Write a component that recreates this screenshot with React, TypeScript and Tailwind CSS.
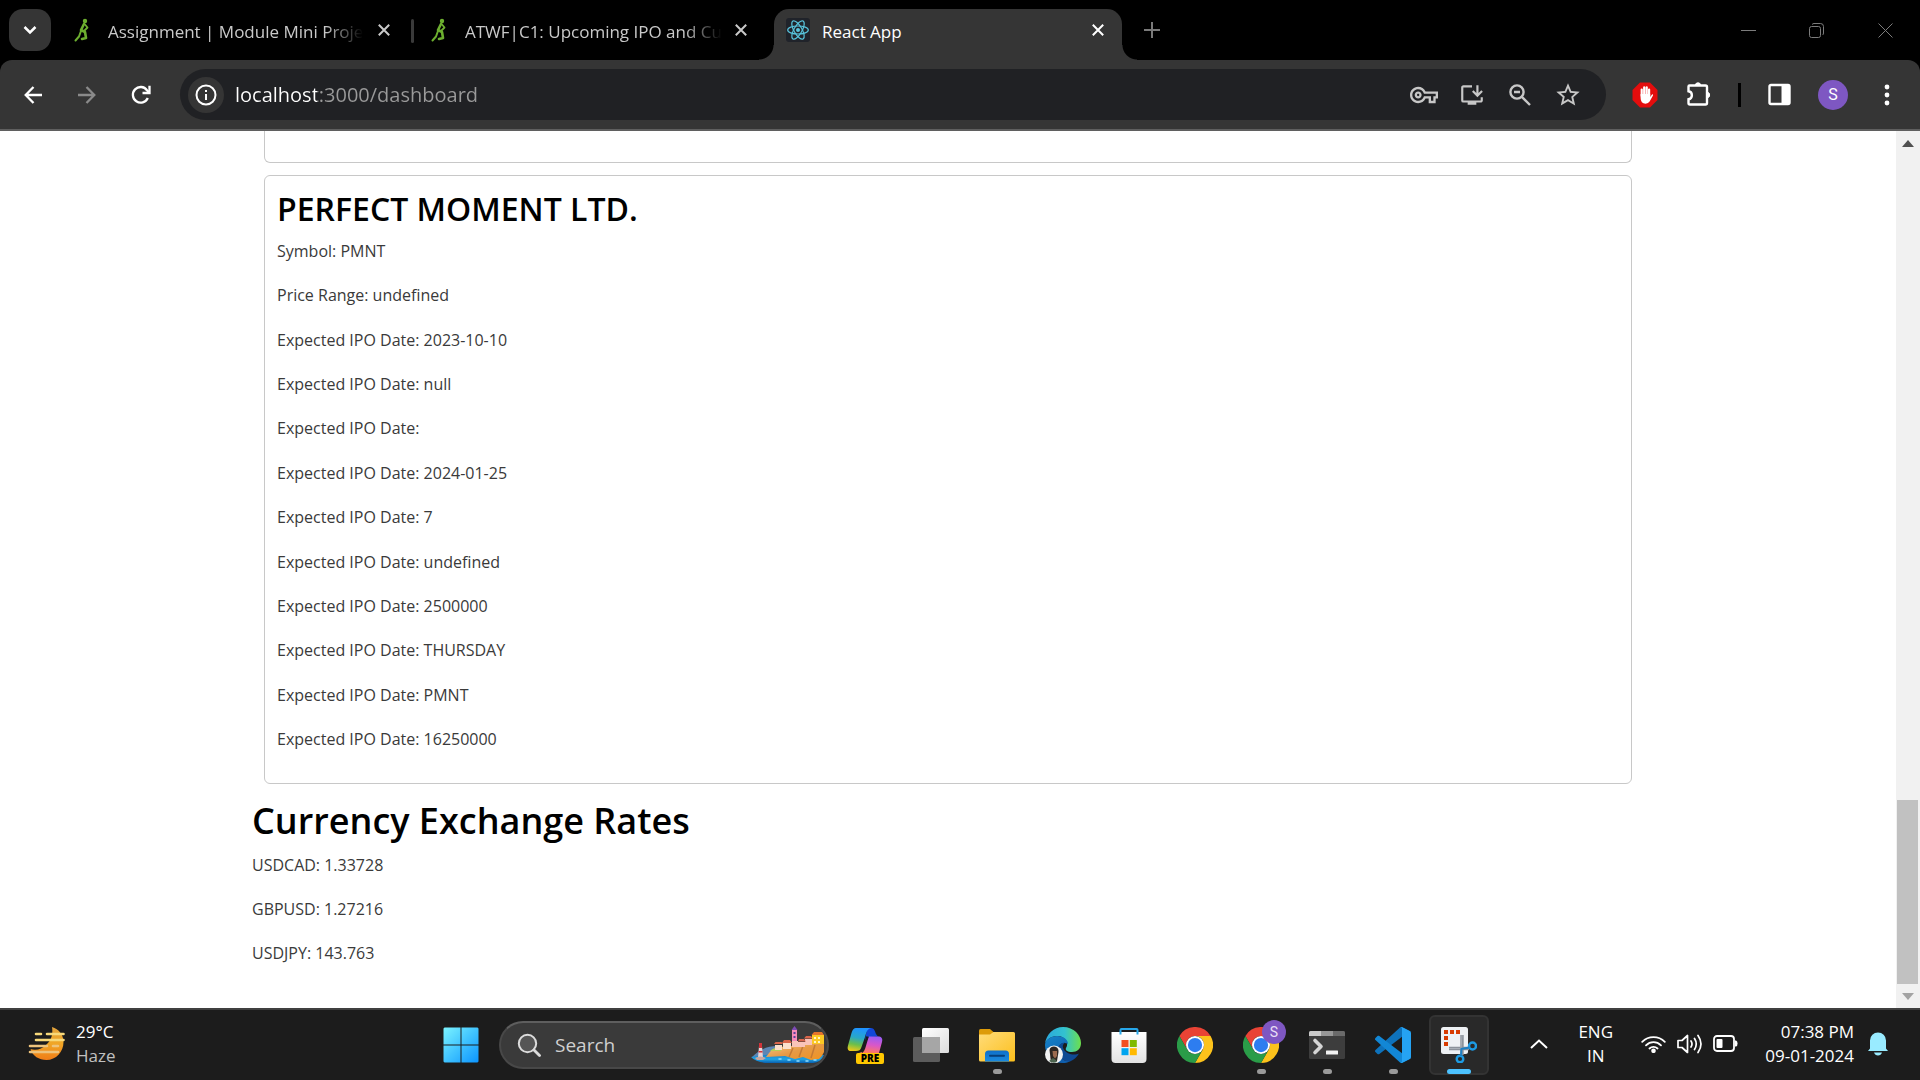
import React from "react";
import type { ReactNode } from "react";
import { MdOutlineInstallDesktop, MdOutlineVpnKey, MdStarOutline } from "react-icons/md";

const ipoLines = [
  "Symbol: PMNT",
  "Price Range: undefined",
  "Expected IPO Date: 2023-10-10",
  "Expected IPO Date: null",
  "Expected IPO Date:",
  "Expected IPO Date: 2024-01-25",
  "Expected IPO Date: 7",
  "Expected IPO Date: undefined",
  "Expected IPO Date: 2500000",
  "Expected IPO Date: THURSDAY",
  "Expected IPO Date: PMNT",
  "Expected IPO Date: 16250000",
];

const rates = ["USDCAD: 1.33728", "GBPUSD: 1.27216", "USDJPY: 143.763"];

/* ---------- browser icons ---------- */

function RunnerIcon() {
  return (
    <svg viewBox="0 0 24 24" className="size-6 shrink-0" aria-hidden="true">
      <g fill="none" stroke="#6cae2f" strokeLinecap="round" strokeLinejoin="round">
        <circle cx="13" cy="3" r="1.6" fill="#6cae2f" strokeWidth="1.2" />
        <path d="M12 6 L9 12 L13 14 L14 20 L10 21" strokeWidth="2.6" />
        <path d="M13 6.500 L15.500 9.500 L12.500 12.500" strokeWidth="1.8" />
        <path d="M9 13 L7 18.500 L3.500 22.500" strokeWidth="2" />
      </g>
    </svg>
  );
}

function ReactIcon() {
  return (
    <svg viewBox="0 0 24 24" className="size-6 shrink-0" aria-hidden="true">
      <rect width="24" height="24" rx="3" fill="#20232a" />
      <g fill="none" stroke="#58c4dc" strokeWidth="1.200">
        <ellipse cx="12" cy="12" rx="10.300" ry="4" />
        <ellipse cx="12" cy="12" rx="10.300" ry="4" transform="rotate(60 12 12)" />
        <ellipse cx="12" cy="12" rx="10.300" ry="4" transform="rotate(120 12 12)" />
      </g>
      <circle cx="12" cy="12" r="2" fill="#58c4dc" />
    </svg>
  );
}

function CloseIcon() {
  return (
    <svg viewBox="0 0 12 12" className="size-3" fill="none" stroke="currentColor" strokeWidth="2" aria-hidden="true">
      <path d="M0.800 0.800 L11.200 11.200 M11.200 0.800 L0.800 11.200" />
    </svg>
  );
}

function BackIcon() {
  return (
    <svg viewBox="0 0 18 18" className="size-[18px]" fill="none" stroke="currentColor" strokeWidth="2.300" aria-hidden="true">
      <path d="M18 9 H2 M9.500 1 L1.700 9 L9.500 17" />
    </svg>
  );
}

function ForwardIcon() {
  return (
    <svg viewBox="0 0 18 18" className="size-[18px]" fill="none" stroke="currentColor" strokeWidth="2.300" aria-hidden="true">
      <path d="M0 9 H16 M8.500 1 L16.300 9 L8.500 17" />
    </svg>
  );
}

function ReloadIcon() {
  return (
    <svg viewBox="0 0 20 20" className="size-5" fill="none" stroke="currentColor" strokeWidth="2.300" aria-hidden="true">
      <path d="M16.800 13 A7.800 7.800 0 1 1 16 5.200 L18.200 7.600" />
      <path d="M18.500 0.800 V8 H11.500" />
    </svg>
  );
}

function InfoIcon() {
  return (
    <svg viewBox="0 0 22 22" className="size-[22px]" fill="none" stroke="#fff" strokeWidth="2" aria-hidden="true">
      <circle cx="11" cy="11" r="9.500" />
      <path d="M11 10 V16 M11 6 V8" />
    </svg>
  );
}

function ZoomOutIcon() {
  return (
    <svg viewBox="0 0 22 22" className="size-[22px]" fill="none" stroke="currentColor" strokeWidth="2.400" aria-hidden="true">
      <circle cx="8" cy="8" r="6.600" />
      <path d="M5 8 H11 M12.600 12.600 L21 21" />
    </svg>
  );
}

function BlockerIcon() {
  return (
    <svg viewBox="0 0 26 26" className="size-[26px]" aria-hidden="true">
      <path d="M8 0.500 H18 L25.500 8 V18 L18 25.500 H8 L0.500 18 V8 Z" fill="#e40d0d" />
      <g stroke="#fff" strokeWidth="2.200" strokeLinecap="round" fill="none">
        <path d="M9.700 14 V7.500 M12.200 13 V5.300 M14.700 13 V5.300 M17.100 14 V7.500" />
      </g>
      <path d="M8.600 12 H18.200 V15 L20 12.500 Q21.400 12 21 13.400 L17.600 19.600 Q16.400 21.700 13.600 21.700 Q8.600 21.500 8.600 16 Z" fill="#fff" />
    </svg>
  );
}

function PuzzleIcon() {
  return (
    <svg viewBox="0 0 26 26" className="size-[26px]" aria-hidden="true">
      <path
        d="M3.500 3.500 H19.500 Q21 3.500 21 5 V21 Q21 22.500 19.500 22.500 H4 Q2.500 22.500 2.500 21 V17.300 C7 16.600 7 9.800 2.500 9.200 V4.500 Q2.500 3.500 3.500 3.500 Z"
        fill="none"
        stroke="#fff"
        strokeWidth="2.400"
      />
      <path d="M9.300 3.500 A2.700 2.700 0 0 1 14.700 3.500 Z M21 10.300 A2.700 2.700 0 0 1 21 15.700 Z" fill="#fff" stroke="#fff" />
    </svg>
  );
}

function SidePanelIcon() {
  return (
    <svg viewBox="0 0 23 23" className="size-[23px]" aria-hidden="true">
      <rect x="1.500" y="2" width="20" height="19" rx="1.500" fill="none" stroke="#fff" strokeWidth="2.400" />
      <path d="M13.500 2 H21.500 V21 H13.500 Z" fill="#fff" />
    </svg>
  );
}

/* ---------- taskbar icons ---------- */

function HazeIcon() {
  return (
    <svg viewBox="0 0 38 38" className="size-[38px]" aria-hidden="true">
      <defs>
        <linearGradient id="moon" x1="0" y1="0" x2="0" y2="1">
          <stop offset="0" stopColor="#e2a33d" />
          <stop offset="0.500" stopColor="#f0a626" />
          <stop offset="1" stopColor="#ef7d17" />
        </linearGradient>
      </defs>
      <path d="M24 2 C31 4 35.500 10 35.500 17 C35.500 27 28 35 18.500 35 C11 35 4.500 31 2.500 24 C8 26 14 24 18 20 C24 15 25 8 24 2 Z" fill="url(#moon)" />
      <g stroke="#f8d97a" strokeWidth="2.600" strokeLinecap="round">
        <path d="M8 9 H13 M19 9 H35.500 M8 15 H35.500" />
        <path d="M2 21 H19 M25 21 H30 M2 27 H30" stroke="#edc37c" />
      </g>
    </svg>
  );
}

function StartIcon() {
  return (
    <svg viewBox="0 0 36 36" className="size-9" aria-hidden="true">
      <defs>
        <linearGradient id="start" x1="0" y1="0" x2="36" y2="36" gradientUnits="userSpaceOnUse">
          <stop offset="0" stopColor="#7df5ff" />
          <stop offset="0.500" stopColor="#41c4ff" />
          <stop offset="1" stopColor="#0a93ff" />
        </linearGradient>
      </defs>
      <path d="M1.500 0.500 H17.500 V17.500 H0.500 V1.500 Z M18.500 0.500 H34.500 L35.500 1.500 V17.500 H18.500 Z M0.500 18.500 H17.500 V35.500 H1.500 L0.500 34.500 Z M18.500 18.500 H35.500 V34.500 L34.500 35.500 H18.500 Z" fill="url(#start)" />
    </svg>
  );
}

function SearchIcon() {
  return (
    <svg viewBox="0 0 24 24" className="size-6 shrink-0" fill="none" stroke="#dcdcdc" aria-hidden="true">
      <circle cx="10.500" cy="10.500" r="8.700" strokeWidth="2" fill="#555" />
      <path d="M17 17 L22.500 22.500" strokeWidth="2.800" strokeLinecap="round" />
    </svg>
  );
}

function HarbourArt() {
  return (
    <svg viewBox="0 0 74 38" className="h-[38px] w-[74px] shrink-0" aria-hidden="true">
      <defs>
        <linearGradient id="sea" x1="0" y1="0" x2="0" y2="1">
          <stop offset="0" stopColor="#1b77c0" />
          <stop offset="0.600" stopColor="#1fa5e6" />
          <stop offset="1" stopColor="#0a5fae" />
        </linearGradient>
        <linearGradient id="cliff" x1="0" y1="0" x2="1" y2="1">
          <stop offset="0" stopColor="#f7c98a" />
          <stop offset="0.500" stopColor="#e69a45" />
          <stop offset="1" stopColor="#f0921f" />
        </linearGradient>
      </defs>
      <path d="M1 31 C10 22 18 20 26 20 L36 26 L30 34 Z" fill="#5c86b4" />
      <path d="M0 31 Q30 25 73 29 Q70 36 62 37 H14 Q5 36 0 31 Z" fill="url(#sea)" />
      <path d="M15 31 Q20 23 28 21 L40 20 L62 17 L73 17 V26 Q71 31 68 33 L60 34 L52 31 L44 33 L34 30 Z" fill="url(#cliff)" />
      <path d="M42 22 L38 31 M52 20 L48 31 M64 19 L60 32" stroke="#c47a35" strokeWidth="1.500" />
      <path d="M19 25 Q24 20 31 22 L30 25 Z" fill="#b9cf55" />
      <path d="M24 19 H31 V24 H24 Z M32 17 H40 V23 H32 Z" fill="#fbe0cc" />
      <path d="M41 15 H47 V21 H41 Z M47 16 H54 V21 H47 Z M54 13 H61 V19 H54 Z" fill="#f9c4b8" />
      <path d="M23 18 H32 L30.500 16 H24.500 Z M31 17 H41 L39 14 H33 Z M47 15.500 H55 L53 13 H48 Z M53 12.500 H62 L60 10 H55 Z" fill="#d9654a" />
      <path d="M61 9 H73 V18 H61 Z" fill="#fbc823" />
      <path d="M60.500 9 L63 6 H71 L73 9 Z" fill="#e5742b" />
      <path d="M63 11 H65 V13 H63 Z M67 11 H69 V13 H67 Z M63 15 H65 V17 H63 Z M67 15 H69 V17 H67 Z" fill="#fff3c4" />
      <path d="M41 4 H46 V15 H41 Z" fill="#f58ab8" />
      <path d="M40.500 4 L43.500 0 L46.500 4 Z" fill="#7e4bb5" />
      <path d="M42.500 6 H44.500 V8 H42.500 Z M42.500 10 H44.500 V12 H42.500 Z" fill="#5c3f99" />
      <path d="M8 20 H11 L12 32 H7 Z" fill="#e9d5d6" />
      <path d="M8 17 H11 V22 H8 Z M7.600 25 H11.500 V26.500 H7.500 Z" fill="#d1343a" />
      <path d="M4 32 Q9 29 15 32 L12 34 H6 Z" fill="#c8a7a0" />
      <g stroke="#8fdcff" strokeWidth="1.500" strokeLinecap="round">
        <path d="M28 33 H30 M37 34 H39 M46 35 H48 M55 35 H57 M63 34 H65" />
      </g>
    </svg>
  );
}

function CopilotIcon() {
  return (
    <svg viewBox="0 0 36 36" className="size-9" aria-hidden="true">
      <defs>
        <linearGradient id="copA" x1="0.400" y1="0" x2="0.200" y2="1">
          <stop offset="0" stopColor="#1f93ff" />
          <stop offset="0.400" stopColor="#28a8c8" />
          <stop offset="0.700" stopColor="#6bbf4b" />
          <stop offset="1" stopColor="#f5c916" />
        </linearGradient>
        <linearGradient id="copB" x1="0.600" y1="0" x2="0.400" y2="1">
          <stop offset="0" stopColor="#9a5cf5" />
          <stop offset="0.500" stopColor="#d957c9" />
          <stop offset="1" stopColor="#ff7a5c" />
        </linearGradient>
      </defs>
      <path d="M20 1 H24 C27 1 28 4 29 7 Q30 9 32 9.500 L24 10 C21 10 19 13 18 14 Z" fill="#1247d6" />
      <path d="M9 1 H24 C20 2 19.500 5 18 10 L14.500 20 C13.500 23 12 24 9 24 H4 C1 24 0 22 1 18.500 L4.500 6 C5.500 2.500 7 1 9 1 Z" fill="url(#copA)" />
      <path d="M22 9.500 H31 C34.500 9.500 36 11.500 35 15 L32 26 H12 C16 25 16.500 22 17.500 18.500 Z" fill="url(#copB)" />
      <path d="M20.500 9.500 L17 21 Q16 24 14.500 25" stroke="#1c1c1c" strokeWidth="2.500" fill="none" />
    </svg>
  );
}

function TaskViewIcon() {
  return (
    <svg viewBox="0 0 36 36" className="size-9" aria-hidden="true">
      <defs>
        <linearGradient id="tv" x1="0" y1="0" x2="1" y2="1">
          <stop offset="0" stopColor="#ffffff" />
          <stop offset="1" stopColor="#dcdcdc" />
        </linearGradient>
      </defs>
      <rect x="9" y="1" width="27" height="25" rx="1.500" fill="url(#tv)" />
      <rect x="0" y="10" width="27" height="25" rx="1.500" fill="#5c5c5c" />
      <path d="M9 10 H27 V26 H9 Z" fill="#a6a6a6" />
    </svg>
  );
}

function FolderIcon() {
  return (
    <svg viewBox="0 0 36 36" className="size-9" aria-hidden="true">
      <defs>
        <linearGradient id="fold" x1="0" y1="0" x2="1" y2="1">
          <stop offset="0" stopColor="#ffdc7a" />
          <stop offset="1" stopColor="#fcbf1c" />
        </linearGradient>
        <linearGradient id="foldB" x1="0" y1="0" x2="0" y2="1">
          <stop offset="0" stopColor="#0f6fc9" />
          <stop offset="1" stopColor="#1a8be0" />
        </linearGradient>
      </defs>
      <path d="M0 3.500 Q0 2 1.500 2 H11 L15 5.500 V10 H0 Z" fill="#dd9b09" />
      <path d="M0 7.500 H11 L14.500 5 H34.500 Q36 5 36 6.500 V33 Q36 34.500 34.500 34.500 H1.500 Q0 34.500 0 33 Z" fill="url(#fold)" />
      <path d="M6 34.500 V27 Q6 23.500 9.500 23.500 H26.500 Q30 23.500 30 27 V34.500 Z" fill="url(#foldB)" />
      <path d="M11 28.700 H25" stroke="#063f7a" strokeWidth="2" strokeLinecap="round" />
    </svg>
  );
}

function EdgeIcon() {
  return (
    <svg viewBox="0 0 36 36" className="size-9" aria-hidden="true">
      <defs>
        <linearGradient id="edgeA" x1="0" y1="0.500" x2="1" y2="0.500">
          <stop offset="0" stopColor="#2aa8dd" />
          <stop offset="0.550" stopColor="#33c2cf" />
          <stop offset="1" stopColor="#6de04c" />
        </linearGradient>
        <linearGradient id="edgeB" x1="0" y1="0" x2="0.500" y2="1">
          <stop offset="0" stopColor="#1683c9" />
          <stop offset="1" stopColor="#0f5fae" />
        </linearGradient>
      </defs>
      <path d="M0 17 C1 7 9 0 18 0 C29 0 36 8 36 16 C36 22 32 25 27 25 C22 25 20 23 21 21 C24 17 21 9 12 9 C6 9 1 13 0 17 Z" fill="url(#edgeA)" />
      <path d="M0 18 C0 13 6 9 12 9 C19 9 23 13 23 17 C18 14 13 18 13 23 C13 29 18 35 25 34 C22 36 20 36 18 36 C8 36 0 28 0 18 Z" fill="url(#edgeB)" />
      <path d="M13 23 C13 29 18 35 25 34.500 C29 33 32 30 34 26.500 C30 28.500 22 28 18.500 22 C17 19 18 17 20 15.500 C16 15.500 13 18.500 13 23 Z" fill="#0e4a94" />
      <circle cx="9" cy="27.500" r="9" fill="#f2f2f2" />
      <path d="M4.500 23 Q5 19.500 9 19.500 Q14 20 13.500 25 L12 34 L6 35.500 Z" fill="#2d2622" />
      <path d="M7.500 24 H12 V29 L10 31.500 L8 29 Z" fill="#9c6b50" />
      <path d="M4 34 L8 31 L11 33 L12 35 Q8 37 4 34 Z" fill="#4d6550" />
    </svg>
  );
}

function StoreIcon() {
  return (
    <svg viewBox="0 0 36 36" className="size-9" aria-hidden="true">
      <defs>
        <linearGradient id="bag" x1="0" y1="0" x2="0" y2="1">
          <stop offset="0" stopColor="#ffffff" />
          <stop offset="1" stopColor="#e2e2e2" />
        </linearGradient>
      </defs>
      <path d="M0.500 5 H35.500 V32 Q35.500 36 31.500 36 H4.500 Q0.500 36 0.500 32 Z" fill="url(#bag)" />
      <path d="M9.500 7.500 V3 Q9.500 2 10.500 2 H25.500 Q26.500 2 26.500 3 V7.500" fill="none" stroke="#27a7ea" strokeWidth="2" />
      <path d="M10.500 13 H17.500 V20 H10.500 Z" fill="#f25022" />
      <path d="M18.800 13 H25.800 V20 H18.800 Z" fill="#7fba00" />
      <path d="M10.500 21.200 H17.500 V28.200 H10.500 Z" fill="#00a4ef" />
      <path d="M18.800 21.200 H25.800 V28.200 H18.800 Z" fill="#ffb900" />
    </svg>
  );
}

function ChromeIcon() {
  return (
    <svg viewBox="0 0 48 48" className="size-9" aria-hidden="true">
      <path d="M24 12 H44.800 A24 24 0 0 0 3.200 12 L13.600 30 A12 12 0 0 1 24 12 Z" fill="#e94335" />
      <path d="M44.800 12 A24 24 0 0 1 24 48 L34.400 30 A12 12 0 0 0 24 12 Z" fill="#fcc21b" />
      <path d="M3.200 12 A24 24 0 0 0 24 48 L34.400 30 A12 12 0 0 1 13.600 30 Z" fill="#2a9c48" />
      <circle cx="24" cy="24" r="12" fill="#fff" />
      <circle cx="24" cy="24" r="9.500" fill="#2d7df0" />
    </svg>
  );
}

function TerminalIcon() {
  return (
    <svg viewBox="0 0 36 36" className="size-9" aria-hidden="true">
      <rect x="0" y="4" width="36" height="28" rx="1.500" fill="#3d3d3d" />
      <path d="M0 9 V5.500 Q0 4 1.500 4 H12 V9 Z" fill="#c9c9c9" />
      <path d="M12 4 H24 V9 H12 Z" fill="#979797" />
      <path d="M24 4 H34.500 Q36 4 36 5.500 V9 H24 Z" fill="#6a6a6a" />
      <path d="M6 13.500 L12 19.500 L6 25.500" fill="none" stroke="#d6d6d6" strokeWidth="3.600" strokeLinecap="round" strokeLinejoin="round" />
      <rect x="17" y="23.500" width="12" height="4" rx="0.500" fill="#f2f2f2" />
    </svg>
  );
}

function VsCodeIcon() {
  return (
    <svg viewBox="0 0 100 100" className="size-9" aria-hidden="true">
      <path d="M96.460 10.800 L75.860 0.880 C73.470 -0.270 70.620 0.210 68.750 2.080 L1.300 63.580 C-0.510 65.230 -0.510 68.090 1.300 69.740 L6.810 74.750 C8.300 76.100 10.530 76.200 12.140 74.980 L93.360 13.360 C96.090 11.300 100 13.240 100 16.660 V16.430 C100 14.030 98.620 11.840 96.460 10.800 Z" fill="#0e72bb" />
      <path d="M96.460 89.200 L75.860 99.120 C73.470 100.270 70.620 99.790 68.750 97.920 L1.300 36.420 C-0.510 34.770 -0.510 31.910 1.300 30.260 L6.810 25.250 C8.300 23.900 10.530 23.800 12.140 25.020 L93.360 86.640 C96.090 88.700 100 86.760 100 83.340 V83.570 C100 85.970 98.620 88.160 96.460 89.200 Z" fill="#1287d6" />
      <path d="M75.860 99.130 C73.470 100.270 70.620 99.790 68.750 97.910 C71.060 100.220 75 98.590 75 95.330 V4.670 C75 1.410 71.060 -0.220 68.750 2.090 C70.620 0.210 73.470 -0.270 75.860 0.870 L96.460 10.780 C98.620 11.820 100 14.010 100 16.410 V83.590 C100 85.990 98.620 88.180 96.460 89.220 Z" fill="#25a3f3" />
    </svg>
  );
}

function SnipIcon() {
  return (
    <svg viewBox="0 0 36 36" className="size-9" aria-hidden="true">
      <rect x="0" y="0" width="27" height="27" rx="2.500" fill="#eef1f4" />
      <path d="M3 3 H7 V7 H3 Z M9 3 H13 V7 H9 Z M15 3 H19 V7 H15 Z M3 9 H7 V13 H3 Z M3 15 H7 V19 H3 Z" fill="#d83b01" />
      <path d="M21 8 V28 M8 21.500 H28" stroke="#8b929b" strokeWidth="3.400" fill="none" />
      <path d="M8 21.500 H20 L21 8" stroke="#a9afb7" strokeWidth="1" fill="none" />
      <circle cx="31.500" cy="19" r="3.500" fill="none" stroke="#1d9be3" strokeWidth="2.400" />
      <circle cx="19" cy="32" r="3.300" fill="none" stroke="#1d9be3" strokeWidth="2.400" />
      <path d="M20 22 L28.500 20.500 M20.500 21 L20 29" stroke="#1d7fc4" strokeWidth="2" />
    </svg>
  );
}

/* ---------- browser chrome ---------- */

function Tab({ icon, title, active }: { icon: ReactNode; title: string; active?: boolean }) {
  if (active) {
    return (
      <div className="relative ml-[6px] mr-[3px] flex w-[348px] items-center rounded-t-[15px] bg-[#353535] px-3 pb-[9px] text-white">
        <span className="absolute bottom-0 -left-[15px] size-[15px] bg-[radial-gradient(circle_at_0_0,transparent_14px,#353535_15px)]" />
        <span className="absolute bottom-0 -right-[15px] size-[15px] bg-[radial-gradient(circle_at_100%_0,transparent_14px,#353535_15px)]" />
        <a href="#dashboard" className="flex min-w-0 flex-1 items-center gap-3">
          {icon}
          <span className="pt-[3px] text-[17px] leading-6">{title}</span>
        </a>
        <button aria-label={`Close ${title}`} className="flex size-6 shrink-0 items-center justify-center">
          <CloseIcon />
        </button>
      </div>
    );
  }
  return (
    <div className="flex w-[357px] items-center pr-[15px] pb-[9px] pl-[18px] text-[#c9c9c9]">
      <a href="#tab" className="flex min-w-0 flex-1 items-center gap-3">
        {icon}
        <span className="mask-r-from-85% pt-[3px] text-[17px] leading-6 whitespace-nowrap">{title}</span>
      </a>
      <button aria-label={`Close ${title}`} className="flex size-6 shrink-0 items-center justify-center">
        <CloseIcon />
      </button>
    </div>
  );
}

function TabStrip() {
  return (
    <div className="flex h-[60px] shrink-0 bg-black pt-[9px]">
      <button aria-label="Search tabs" className="mr-[3px] ml-[9px] flex size-[42px] items-center justify-center rounded-[14px] bg-[#353535] text-white">
        <svg viewBox="0 0 14 9" className="h-[9px] w-[14px]" fill="none" stroke="currentColor" strokeWidth="2.500" aria-hidden="true">
          <path d="M1.500 1 L7 6.500 L12.500 1" />
        </svg>
      </button>
      <Tab icon={<RunnerIcon />} title="Assignment | Module Mini Proje" />
      <span className="-mr-[3px] mt-[10px] h-6 w-[3px] rounded bg-[#3a3a3a]" />
      <Tab icon={<RunnerIcon />} title="ATWF|C1: Upcoming IPO and Cu" />
      <Tab icon={<ReactIcon />} title="React App" active />
      <button aria-label="New tab" className="ml-[6px] flex size-[42px] items-center justify-center text-[#7a7a7a]">
        <svg viewBox="0 0 16 16" className="size-4" stroke="currentColor" strokeWidth="2" aria-hidden="true">
          <path d="M8 0 V16 M0 8 H16" />
        </svg>
      </button>
      <div className="ml-auto flex h-[42px] text-[#7c7c7c]">
        <button aria-label="Minimize" className="flex w-[68px] items-center justify-center">
          <svg viewBox="0 0 15 15" className="size-[15px]" stroke="currentColor" aria-hidden="true">
            <path d="M0 7.500 H15" />
          </svg>
        </button>
        <button aria-label="Restore" className="flex w-[68px] items-center justify-center">
          <svg viewBox="0 0 15 15" className="size-[15px]" fill="none" stroke="currentColor" aria-hidden="true">
            <rect x="0.500" y="3.500" width="11" height="11" rx="2" />
            <path d="M3 1.500 Q4 0.500 5 0.500 H11.500 Q14.500 0.500 14.500 3.500 V10 Q14.500 11.500 13.500 12" />
          </svg>
        </button>
        <button aria-label="Close window" className="flex w-[70px] items-center justify-center">
          <svg viewBox="0 0 15 15" className="size-[15px]" fill="none" stroke="currentColor" aria-hidden="true">
            <path d="M0.500 0.500 L14.500 14.500 M14.500 0.500 L0.500 14.500" />
          </svg>
        </button>
      </div>
    </div>
  );
}

function ToolButton({ label, children, dim }: { label: string; children: ReactNode; dim?: boolean }) {
  return (
    <button
      aria-label={label}
      className={`flex size-[42px] shrink-0 items-center justify-center ${dim ? "text-[#8a8a8a]" : "text-white"}`}
    >
      {children}
    </button>
  );
}

function Toolbar() {
  return (
    <div className="shrink-0 bg-black">
      <div className="flex h-[71px] items-center gap-3 rounded-t-[12px] border-b-2 border-[#5f5f5f] bg-[#353535] px-3">
        <ToolButton label="Back"><BackIcon /></ToolButton>
        <ToolButton label="Forward" dim><ForwardIcon /></ToolButton>
        <ToolButton label="Reload"><ReloadIcon /></ToolButton>
        <div className="mx-[6px] flex h-[51px] flex-1 items-center rounded-full bg-[#202124] pr-5 pl-2">
          <button aria-label="View site information" className="flex size-9 items-center justify-center rounded-full bg-[#353535]">
            <InfoIcon />
          </button>
          <input
            aria-label="Address"
            defaultValue="localhost:3000/dashboard"
            className="ml-[11px] min-w-0 flex-1 bg-linear-to-r from-white from-[82px] to-[#9a9a9a] to-[82px] bg-clip-text text-[20px] leading-8 text-transparent caret-white outline-none"
          />
          <div className="flex gap-3 text-[#c7c7c7]">
            <button aria-label="Passwords" className="flex size-9 items-center justify-center"><MdOutlineVpnKey className="size-7" /></button>
            <button aria-label="Install app" className="flex size-9 items-center justify-center"><MdOutlineInstallDesktop className="size-[26px]" /></button>
            <button aria-label="Zoom" className="flex size-9 items-center justify-center"><ZoomOutIcon /></button>
            <button aria-label="Bookmark" className="flex size-9 items-center justify-center"><MdStarOutline className="size-7" /></button>
          </div>
        </div>
        <ToolButton label="Ad blocker"><BlockerIcon /></ToolButton>
        <ToolButton label="Extensions"><PuzzleIcon /></ToolButton>
        <span className="flex w-[14px] justify-center"><span className="h-6 w-[3px] bg-black" /></span>
        <ToolButton label="Side panel"><SidePanelIcon /></ToolButton>
        <ToolButton label="Profile">
          <span className="flex size-[30px] items-center justify-center rounded-full bg-[#7e57c2] font-['Roboto',sans-serif] text-[16px]">S</span>
        </ToolButton>
        <ToolButton label="Menu">
          <svg viewBox="0 0 6 22" className="h-[22px] w-[6px]" fill="currentColor" aria-hidden="true">
            <circle cx="3" cy="3" r="2.400" /><circle cx="3" cy="11" r="2.400" /><circle cx="3" cy="19" r="2.400" />
          </svg>
        </ToolButton>
      </div>
    </div>
  );
}

/* ---------- page ---------- */

function Dashboard() {
  return (
    <div className="min-w-0 flex-1 overflow-hidden">
      <div className="mx-auto w-full max-w-[1392px] text-[#3a3a3a]">
        <div className="mx-3 h-8 rounded-b-[6px] border border-t-0 border-[#c8c8c8]" />
        <article className="mx-3 mt-3 rounded-[6px] border border-[#c8c8c8] px-3 pt-3 pb-[30px]">
          <h2 className="mb-2 text-[32px] leading-[42px] font-semibold text-black">PERFECT MOMENT LTD.</h2>
          <div className="flex min-h-[515px] flex-col justify-between text-[16px] leading-[27px]">
            {ipoLines.map((line) => (
              <p key={line}>{line}</p>
            ))}
          </div>
        </article>
        <section>
          <h1 className="mt-[14px] mb-2 text-[36px] leading-[46px] font-semibold text-black">Currency Exchange Rates</h1>
          <div className="flex flex-col gap-[17px] text-[16px] leading-[27px]">
            {rates.map((rate) => (
              <p key={rate}>{rate}</p>
            ))}
          </div>
        </section>
      </div>
    </div>
  );
}

function Scrollbar() {
  return (
    <div className="flex w-6 shrink-0 flex-col items-center bg-[#f1f1f1]">
      <button aria-label="Scroll up" className="flex h-6 w-full items-center justify-center">
        <svg viewBox="0 0 12 7" className="h-[7px] w-3" fill="#505050" aria-hidden="true"><path d="M0 7 L6 0 L12 7 Z" /></svg>
      </button>
      <div className="flex w-full flex-1 flex-col px-px">
        <div className="flex-[645]" />
        <div className="mr-px flex-[184] bg-[#c1c1c1]" />
      </div>
      <button aria-label="Scroll down" className="flex h-6 w-full items-center justify-center">
        <svg viewBox="0 0 12 7" className="h-[7px] w-3" fill="#a3a3a3" aria-hidden="true"><path d="M0 0 L6 7 L12 0 Z" /></svg>
      </button>
    </div>
  );
}

/* ---------- taskbar ---------- */

function TaskButton({ label, children, state }: { label: string; children: ReactNode; state?: "open" | "active" }) {
  return (
    <button
      aria-label={label}
      className={`relative flex h-[60px] w-[60px] items-center justify-center rounded-[6px] border-2 ${
        state === "active" ? "border-[#333333] bg-[#292929]" : "border-transparent"
      }`}
    >
      <span className="relative">{children}</span>
      {state === "open" && <span className="absolute -bottom-px h-[5px] w-[9px] rounded-full bg-[#9a9a9a]" />}
      {state === "active" && <span className="absolute -bottom-px h-[5px] w-6 rounded-full bg-[#4cc2ff]" />}
    </button>
  );
}

function Taskbar() {
  return (
    <footer className="grid h-[72px] shrink-0 grid-cols-[1fr_auto_1fr] items-center border-t-2 border-[#404040] bg-[#1c1c1c] pb-[3px] text-white">
      <button className="flex items-center gap-[10px] pl-7 text-left text-[17px] leading-6">
        <HazeIcon />
        <span className="flex flex-col">
          <span>29°C</span>
          <span className="text-[#c0c0c0]">Haze</span>
        </span>
      </button>

      <div className="flex items-center gap-[6px] pt-[2px]">
        <TaskButton label="Start"><StartIcon /></TaskButton>
        <label className="ml-[2px] flex h-12 w-[330px] items-center rounded-full border-2 border-[#484848] border-t-[#5e5e5e] bg-[#3a3a3a] pr-[2px] pl-4">
          <SearchIcon />
          <input
            type="search"
            placeholder="Search"
            aria-label="Search"
            className="ml-[14px] min-w-0 flex-1 bg-transparent text-[19px] leading-7 outline-none placeholder:text-[#d0d0d0]"
          />
          <HarbourArt />
        </label>
        <TaskButton label="Copilot preview">
          <CopilotIcon />
          <span className="absolute -right-px -bottom-px flex h-[11px] w-7 items-center justify-center rounded-[2px] bg-[#ffc800] text-[10px] leading-none font-extrabold text-black">PRE</span>
        </TaskButton>
        <TaskButton label="Task view"><TaskViewIcon /></TaskButton>
        <TaskButton label="File Explorer" state="open"><FolderIcon /></TaskButton>
        <TaskButton label="Edge"><EdgeIcon /></TaskButton>
        <TaskButton label="Microsoft Store"><StoreIcon /></TaskButton>
        <TaskButton label="Chrome"><ChromeIcon /></TaskButton>
        <TaskButton label="Chrome, profile S" state="open">
          <ChromeIcon />
          <span className="absolute -top-[7px] -right-[7px] flex size-6 items-center justify-center rounded-full bg-[#7e57c2] font-['Roboto',sans-serif] text-[14px] leading-none text-[#e8dff5]">S</span>
        </TaskButton>
        <TaskButton label="Terminal" state="open"><TerminalIcon /></TaskButton>
        <TaskButton label="Visual Studio Code" state="open"><VsCodeIcon /></TaskButton>
        <TaskButton label="Snipping Tool" state="active"><SnipIcon /></TaskButton>
      </div>

      <div className="flex items-center justify-end pr-8 text-[17px] leading-6">
        <button aria-label="Show hidden icons" className="mr-[30px]">
          <svg viewBox="0 0 18 10" className="h-[10px] w-[18px]" fill="none" stroke="#fff" strokeWidth="2" aria-hidden="true">
            <path d="M1 9 L9 1.500 L17 9" />
          </svg>
        </button>
        <button className="mr-7 flex flex-col items-center">
          <span>ENG</span>
          <span>IN</span>
        </button>
        <button aria-label="Network, volume and battery" className="mr-6 flex items-center gap-[11px]">
          <svg viewBox="0 0 25 18" className="h-[18px] w-[25px]" fill="none" stroke="#fff" strokeWidth="1.800" strokeLinecap="round" aria-hidden="true">
            <path d="M1.200 6.800 A16 16 0 0 1 23.800 6.800 M5 10.300 A10.600 10.600 0 0 1 20 10.300 M8.500 13.500 A5.800 5.800 0 0 1 16.500 13.500" />
            <circle cx="12.500" cy="15.800" r="1.400" fill="#fff" />
          </svg>
          <svg viewBox="0 0 25 20" className="h-5 w-[25px]" fill="none" stroke="#fff" strokeWidth="1.700" strokeLinecap="round" strokeLinejoin="round" aria-hidden="true">
            <path d="M1 6.500 H5 L10.500 1.500 V18.500 L5 13.500 H1 Z" />
            <path d="M14 7 Q16 10 14 13 M17.500 4.500 Q21 10 17.500 15.500 M21 1.500 Q27 10 21 18.500" />
          </svg>
          <svg viewBox="0 0 25 17" className="h-[17px] w-[25px]" aria-hidden="true">
            <rect x="1" y="1" width="20" height="15" rx="3" fill="none" stroke="#fff" strokeWidth="1.800" />
            <rect x="3.500" y="4" width="6" height="9" rx="1" fill="#fff" />
            <path d="M22 5.500 H23 Q24.500 6 24.500 8.500 Q24.500 11 23 11.500 H22 Z" fill="#fff" />
          </svg>
        </button>
        <button className="mr-[14px] flex min-w-[92px] flex-col items-end">
          <span>07:38 PM</span>
          <span>09-01-2024</span>
        </button>
        <button aria-label="Notifications">
          <svg viewBox="0 0 20 24" className="h-6 w-5" fill="#99ebff" aria-hidden="true">
            <path d="M2 16.500 V8.500 A8 8 0 0 1 18 8.500 V16.500 L20 19 H0 Z M6 20.500 H14 Q13 23.500 10 23.500 Q7 23.500 6 20.500 Z" />
          </svg>
        </button>
      </div>
    </footer>
  );
}

export default function App() {
  return (
    <div className="flex h-screen flex-col overflow-hidden bg-white font-['Open_Sans','Noto_Sans',sans-serif]">
      <TabStrip />
      <Toolbar />
      <main className="flex min-h-0 flex-1">
        <Dashboard />
        <Scrollbar />
      </main>
      <Taskbar />
    </div>
  );
}
